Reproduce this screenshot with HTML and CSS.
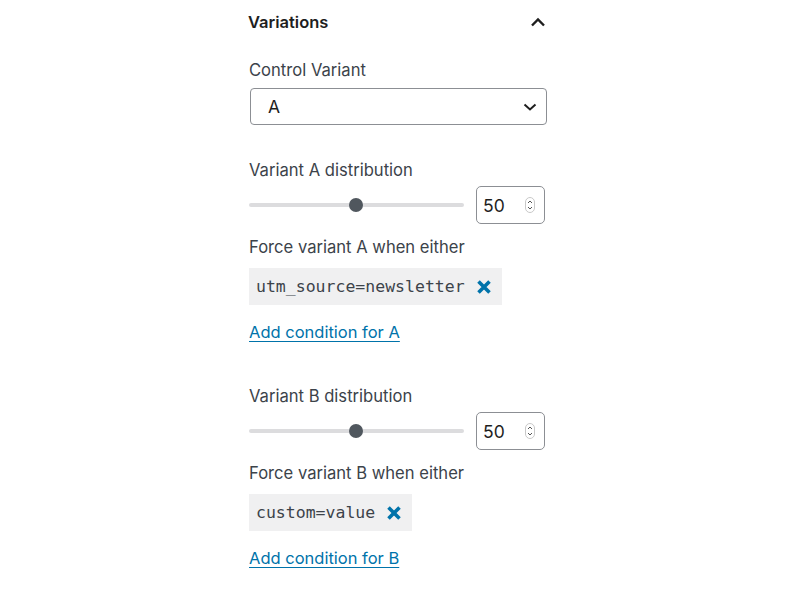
FILE: index.html
```html
<!DOCTYPE html>
<html lang="en">
<head>
<meta charset="utf-8">
<title>Variations</title>
<link rel="stylesheet" href="styles.css">
</head>
<body>
<div class="panel">
  <div class="panel-header">
    <h2 class="panel-title">Variations</h2>
    <svg class="chev-up" width="16" height="10" viewBox="0 0 16 10"><path d="M2 8.5 L8 2.5 L14 8.5" fill="none" stroke="#1e1e1e" stroke-width="2.4"/></svg>
  </div>

  <div class="field">
    <div class="label">Control Variant</div>
    <div class="select">
      <span class="select-value">A</span>
      <svg width="14" height="8" viewBox="0 0 14 8"><path d="M1.5 1.5 L7 6.5 L12.5 1.5" fill="none" stroke="#1e1e1e" stroke-width="2"/></svg>
    </div>
  </div>

  <div class="variant">
    <div class="label">Variant A distribution</div>
    <div class="range-row">
      <div class="track"><div class="thumb"></div></div>
      <div class="number">
        <span class="num-value">50</span>
        <svg class="spin" width="10" height="16" viewBox="0 0 10 16"><rect x="0.5" y="0.5" width="9" height="15" rx="4.5" fill="#fff" stroke="#c8c8c8"/><path d="M3 6 L5 4 L7 6 M3 10 L5 12 L7 10" fill="none" stroke="#555" stroke-width="1"/></svg>
      </div>
    </div>
    <div class="label label-force">Force variant A when either</div>
    <div class="chips">
      <span class="chip"><span class="chip-text">utm_source=newsletter</span><svg class="chip-x" width="16" height="16" viewBox="0 0 16 16"><path d="M2.5 2.5 L13.5 13.5 M13.5 2.5 L2.5 13.5" stroke="#0073aa" stroke-width="3.6"/></svg></span>
    </div>
    <a class="add-link" href="#">Add condition for A</a>
  </div>

  <div class="variant variant-b">
    <div class="label">Variant B distribution</div>
    <div class="range-row">
      <div class="track"><div class="thumb"></div></div>
      <div class="number">
        <span class="num-value">50</span>
        <svg class="spin" width="10" height="16" viewBox="0 0 10 16"><rect x="0.5" y="0.5" width="9" height="15" rx="4.5" fill="#fff" stroke="#c8c8c8"/><path d="M3 6 L5 4 L7 6 M3 10 L5 12 L7 10" fill="none" stroke="#555" stroke-width="1"/></svg>
      </div>
    </div>
    <div class="label label-force">Force variant B when either</div>
    <div class="chips">
      <span class="chip"><span class="chip-text">custom=value</span><svg class="chip-x" width="16" height="16" viewBox="0 0 16 16"><path d="M2.5 2.5 L13.5 13.5 M13.5 2.5 L2.5 13.5" stroke="#0073aa" stroke-width="3.6"/></svg></span>
    </div>
    <a class="add-link" href="#">Add condition for B</a>
  </div>
</div>
</body>
</html>
```

FILE: styles.css
```css
* { box-sizing: border-box; }
html, body { margin: 0; padding: 0; background: #fff; }
body {
  font-family: Inter, "Liberation Sans", Arial, sans-serif;
  color: #3c434a;
  font-size: 16.5px;
}
.panel {
  width: 299px;
  margin-left: 248px;
}
.panel-header {
  height: 44px;
  display: flex;
  align-items: center;
  justify-content: space-between;
  padding-right: 1px;
}
.panel-title {
  margin: 0;
  font-size: 16.5px;
  font-weight: 600;
  color: #1e1e1e;
}
.chev-up { display: block; }
.field { padding-left: 1px; margin-top: 14px; }
.label {
  line-height: 24px;
  font-size: 16.6px;
  color: #3c434a;
}
.select {
  margin-top: 6px;
  height: 37px;
  border: 1px solid #8c8f94;
  border-radius: 4px;
  display: flex;
  align-items: center;
  justify-content: space-between;
  padding: 0 9px 0 17px;
  margin-left: 1px;
}
.select-value { font-size: 17.5px; color: #1e1e1e; }
.select svg { display: block; }
.variant { padding-left: 1px; margin-top: 33px; }
.variant-b { margin-top: 40px; }
.range-row {
  margin-top: 4px;
  height: 38px;
  display: flex;
  align-items: center;
  gap: 12px;
}
.track {
  position: relative;
  width: 215px;
  height: 4px;
  background: #dcdcde;
  border-radius: 2px;
}
.thumb {
  position: absolute;
  left: 100px;
  top: -5px;
  width: 14px;
  height: 14px;
  border-radius: 50%;
  background: #50575e;
}
.number {
  width: 69px;
  height: 38px;
  border: 1px solid #8c8f94;
  border-radius: 5px;
  display: flex;
  align-items: center;
  justify-content: space-between;
  padding: 0 9px 0 6px;
}
.num-value { font-size: 17.5px; color: #1e1e1e; }
.spin { display: block; }
.label-force { margin-top: 11px; }
.chips { margin-top: 9px; display: flex; }
.chip {
  height: 37px;
  display: inline-flex;
  align-items: center;
  gap: 11px;
  background: #f0f0f1;
  padding: 0 10px 0 7px;
}
.chip-text {
  font-family: "DejaVu Sans Mono", "Liberation Mono", monospace;
  font-size: 16.5px;
  color: #3c434a;
}
.chip-x { display: block; }
.add-link {
  display: inline-block;
  margin-top: 15px;
  line-height: 24px;
  font-size: 16.5px;
  color: #0073aa;
  text-decoration: underline;
  text-underline-offset: 3px;
}
```
